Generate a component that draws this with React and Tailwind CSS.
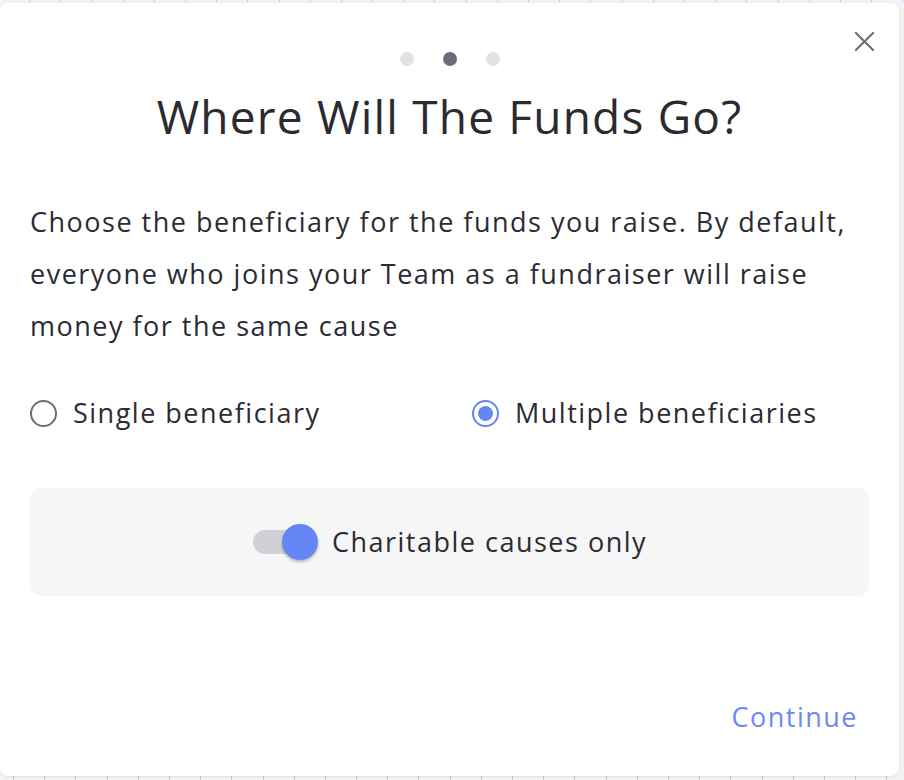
import React from "react";

const ticks = Array.from({ length: 29 });

export default function App() {
  return (
    <div className="w-[904px] h-[780px] bg-[#f3f3f4] flex flex-col overflow-hidden" style={{ fontFamily: '"Open Sans", "Noto Sans", sans-serif' }}>
      <div className="h-[3px] flex pl-[29px] gap-[30.2px]">
        {ticks.map((_, i) => (
          <span key={i} className="w-px h-[2px] bg-[#b8c4f5]" />
        ))}
      </div>
      <div className="w-[899px] h-[773px] bg-white rounded-[8px] shadow-[0_1px_3px_rgba(0,0,0,0.08)] flex flex-col px-[30px] relative">
        <button className="absolute right-[22px] top-[25px] w-[26px] h-[26px] flex items-center justify-center text-[#6b6d7b]">
          <svg width="21" height="21" viewBox="0 0 22 22" fill="none" stroke="currentColor" strokeWidth="2.2" strokeLinecap="round">
            <path d="M2 2 L20 20 M20 2 L2 20" />
          </svg>
        </button>
        <div className="flex justify-center gap-[29px] mt-[49px]">
          <span className="w-[14px] h-[14px] rounded-full bg-[#e1e1e5]" />
          <span className="w-[14px] h-[14px] rounded-full bg-[#6b6d7b]" />
          <span className="w-[14px] h-[14px] rounded-full bg-[#e1e1e5]" />
        </div>
        <h1 className="text-center text-[46px] leading-[56px] text-[#2a2a30] mt-[22px] tracking-[1.2px]">Where Will The Funds Go?</h1>
        <p className="text-[27px] leading-[52px] text-[#2b2b33] mt-[52px] pr-[10px] tracking-[1.5px]">
          Choose the beneficiary for the funds you raise. By default, everyone who joins your Team as a fundraiser will raise money for the same cause
        </p>
        <div className="flex items-center mt-[35px] h-[52px] tracking-[1.5px]">
          <label className="flex items-center w-[442px] gap-[16px]">
            <span className="w-[27px] h-[27px] rounded-full border-[2.5px] border-[#6b6d7b] bg-white" />
            <span className="text-[27px] text-[#2b2b33]">Single beneficiary</span>
          </label>
          <label className="flex items-center gap-[16px]">
            <span className="w-[27px] h-[27px] rounded-full border-[2.5px] border-[#6685f5] flex items-center justify-center">
              <span className="w-[15px] h-[15px] rounded-full bg-[#6685f5]" />
            </span>
            <span className="text-[27px] text-[#2b2b33]">Multiple beneficiaries</span>
          </label>
        </div>
        <div className="mt-[49px] h-[108px] rounded-[10px] bg-[#f6f6f7] flex items-center justify-center gap-[14px]">
          <div className="relative w-[66px] h-[36px] flex items-center">
            <span className="w-[62px] h-[24px] rounded-full bg-[#cfd1d6] ml-[1px]" />
            <span className="absolute right-0 top-0 w-[36px] h-[36px] rounded-full bg-[#6685f5] shadow-[0_2px_3px_rgba(0,0,0,0.25)]" />
          </div>
          <span className="text-[27px] text-[#2b2b33] tracking-[1.5px]">Charitable causes only</span>
        </div>
        <div className="flex-1" />
        <div className="flex justify-end pb-[39px] pr-[11px]">
          <button className="text-[27px] text-[#6b8af5] tracking-[1.5px]">Continue</button>
        </div>
      </div>
      <div className="h-[4px] flex pl-[13px] gap-[30.2px]">
        {ticks.map((_, i) => (
          <span key={i} className="w-px h-[4px] bg-[#b8c4f5]" />
        ))}
      </div>
    </div>
  );
}
